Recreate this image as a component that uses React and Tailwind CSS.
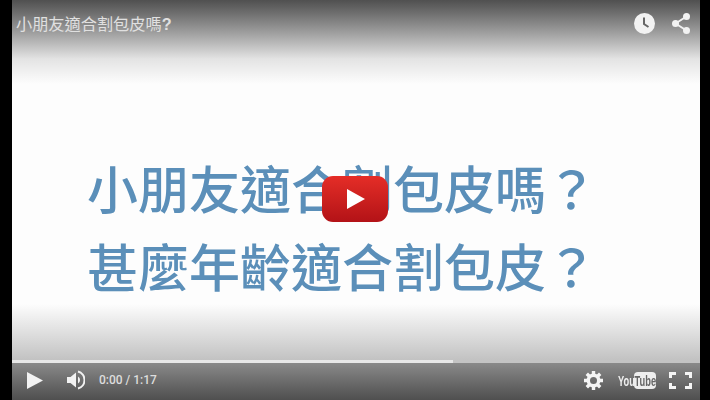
const cjk = "font-['Liberation_Sans','Noto_Sans_CJK_TC',sans-serif]";

function ClockIcon() {
  return (
    <svg width="21" height="21" viewBox="0 0 21 21">
      <circle cx="10.5" cy="10.5" r="10.5" fill="#f2f2f2" />
      <path d="M10 4.5v6.5l4.5 3" fill="none" stroke="#666" strokeWidth="2" />
    </svg>
  );
}

function ShareIcon() {
  return (
    <svg width="18" height="21" viewBox="0 0 18 21" fill="#f2f2f2">
      <circle cx="14.5" cy="3.5" r="3.5" />
      <circle cx="3.5" cy="10.5" r="3.5" />
      <circle cx="14.5" cy="17.5" r="3.5" />
      <path d="M3.5 10.5 14.5 3.5M3.5 10.5l11 7" stroke="#f2f2f2" strokeWidth="2" fill="none" />
    </svg>
  );
}

function PlayIcon() {
  return (
    <svg width="16" height="17" viewBox="0 0 16 17">
      <path d="M0 0 16 8.5 0 17Z" fill="#f2f2f2" />
    </svg>
  );
}

function VolumeIcon() {
  return (
    <svg width="18" height="20" viewBox="0 0 18 20" fill="#f2f2f2">
      <path d="M0 7h3.5L9 2.5v15L3.5 13H0Z" />
      <path d="M11 6.5a4 4 0 0 1 0 7Z" />
      <path d="M11 1.5a8.8 8.8 0 0 1 0 17" fill="none" stroke="#f2f2f2" strokeWidth="2" />
    </svg>
  );
}

function GearIcon() {
  return (
    <svg width="19" height="19" viewBox="0 0 19 19" fill="none" stroke="#f5f5f5">
      <circle cx="9.5" cy="9.5" r="5.2" strokeWidth="3.4" />
      <path
        d="M9.5 0v3.5M9.5 15.5V19M0 9.5h3.5M15.5 9.5H19M2.8 2.8l2.5 2.5M13.7 13.7l2.5 2.5M16.2 2.8l-2.5 2.5M5.3 13.7l-2.5 2.5"
        strokeWidth="3.4"
      />
    </svg>
  );
}

function FullscreenIcon() {
  return (
    <svg width="23" height="17" viewBox="0 0 23 17" fill="none" stroke="#f5f5f5" strokeWidth="3">
      <path d="M1.5 6V1.5H7M16 1.5h5.5V6M21.5 11v4.5H16M7 15.5H1.5V11" />
    </svg>
  );
}

function YouTubeLogo() {
  return (
    <div className="flex items-center font-['Liberation_Sans',sans-serif] font-bold text-[#eee]">
      <span className="w-[16px] origin-left scale-x-[0.62] text-[15px] leading-[17px]">You</span>
      <span className="flex h-[17px] w-[22px] items-center justify-center overflow-hidden rounded-[4px] bg-[#eee] text-[#666]">
        <span className="scale-x-[0.62] text-[15px] leading-[17px]">Tube</span>
      </span>
    </div>
  );
}

function BigPlay() {
  return (
    <div className="absolute left-[310px] top-[176px] flex h-[46px] w-[66px] items-center justify-center rounded-[11px] bg-gradient-to-b from-[#e52d27] to-[#b31217]">
      <svg width="18" height="20" viewBox="0 0 18 20" className="ml-[1px]">
        <path d="M0 0 18 10 0 20Z" fill="#fff" />
      </svg>
    </div>
  );
}

export default function App() {
  return (
    <div className="flex h-[400px] w-[710px] overflow-hidden bg-black pl-[12px] pr-[10px]">
      <div className={`relative flex flex-1 flex-col bg-[#fdfdfd] ${cjk}`}>
        <div className="flex h-[84px] shrink-0 items-start justify-between bg-gradient-to-b from-[#505050] via-[#e3e3e3] via-70% to-transparent pl-[4px] pr-[10px] pt-[13px]">
          <div className="text-[16.2px] leading-[22px] text-[#e0e0e0]">
            小朋友適合割包皮嗎<span className="font-bold">?</span>
          </div>
          <div className="flex items-center gap-[17px]">
            <ClockIcon />
            <ShareIcon />
          </div>
        </div>

        <div className="flex flex-1 flex-col pl-[75px] pt-[64px] font-['Noto_Sans_CJK_TC',sans-serif] text-[51px] font-medium leading-[78px] text-[#5b8fb9] blur-[0.4px]">
          <div className="whitespace-nowrap">小朋友適合割包皮嗎？</div>
          <div className="whitespace-nowrap">甚麼年齡適合割包皮？</div>
        </div>

        <BigPlay />

        <div className="h-[56px] shrink-0 bg-gradient-to-b from-transparent to-[#c2c2c2]"></div>
        <div className="flex h-[3px] shrink-0 blur-[0.4px]">
          <div className="w-[441px] bg-[#e8e8e8]"></div>
          <div className="flex-1 bg-[#c4c4c4]"></div>
        </div>
        <div className="flex h-[37px] shrink-0 items-center bg-gradient-to-b from-[#8a8a8a] to-[#4f4f4f] pl-[15px] pr-[8px] pb-[3px]">
          <PlayIcon />
          <div className="ml-[24px]">
            <VolumeIcon />
          </div>
          <span className="ml-[14px] font-['Roboto',sans-serif] text-[12px] font-medium text-[#ddd]">0:00 / 1:17</span>
          <div className="flex-1"></div>
          <GearIcon />
          <div className="ml-[15px]">
            <YouTubeLogo />
          </div>
          <div className="ml-[13px]">
            <FullscreenIcon />
          </div>
        </div>
      </div>
    </div>
  );
}
